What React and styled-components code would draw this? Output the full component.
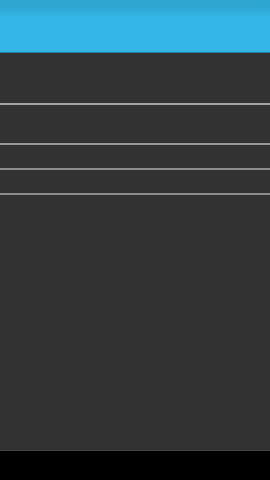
import React from "react";
import styled, { createGlobalStyle } from "styled-components";

const Global = createGlobalStyle`
  html, body { margin: 0; padding: 0; background: #000; }
  body { font-family: "Roboto", "Liberation Sans", sans-serif; }
`;

const Screen = styled.div`
  width: 270px;
  height: 480px;
  display: flex;
  flex-direction: column;
  background: #000;
`;

const ActionBar = styled.header`
  height: 52px;
  flex: none;
  background: linear-gradient(#2ea5cf 0px, #2fa9d6 10px, #33b5e5 16px, #33b5e5 100%);
  border-bottom: 1px solid #2a7f9e;
`;

const Content = styled.main`
  flex: none;
  height: 397px;
  background: #323232;
  display: flex;
  flex-direction: column;
  border-bottom: 1px solid #444;
`;

const Row = styled.div`
  height: ${(p) => p.$h}px;
  flex: none;
  border-bottom: 2px solid ${(p) => p.$line};
  box-sizing: border-box;
`;

const NavBar = styled.footer`
  flex: 1;
  background: #000;
`;

export default function App() {
  return (
    <Screen>
      <Global />
      <ActionBar />
      <Content>
        <Row $h={52} $line="#a6a6a6" />
        <Row $h={40} $line="#9a9a9a" />
        <Row $h={25} $line="#8c8c8c" />
        <Row $h={25} $line="#8c8c8c" />
      </Content>
      <NavBar />
    </Screen>
  );
}
